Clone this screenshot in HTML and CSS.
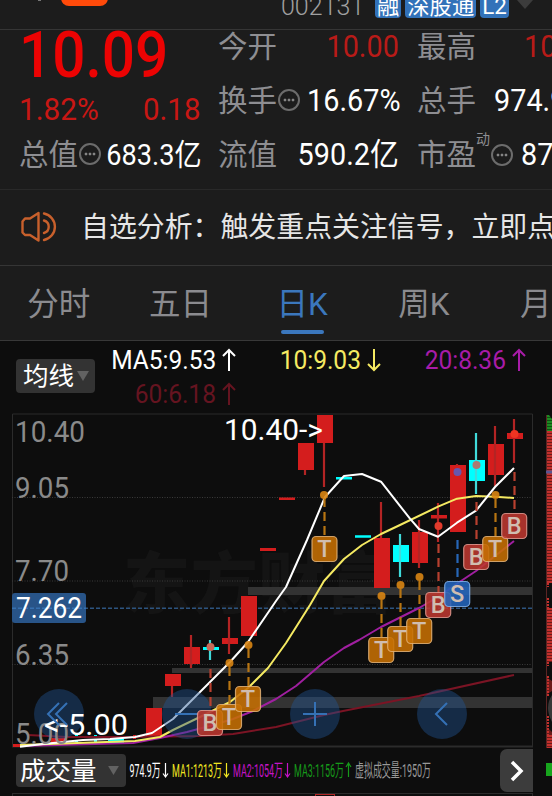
FILE: index.html
```html
<!DOCTYPE html>
<html lang="zh-CN">
<head>
<meta charset="utf-8">
<title>002131</title>
<link rel="stylesheet" href="styles.css">
</head>
<body>
<header class="topbar">
  <i class="tick"></i><i class="pill"></i>
  <span class="code">002131</span>
  <span class="tag">融</span><span class="tag">深股通</span><span class="tag">L2</span>
  <svg class="caret" width="16" height="16" viewBox="0 0 16 16"><path d="M0 5 3 2h10l3 3-8 9z" fill="#3c3c3c"/></svg>
</header>
<section class="quote">
  <div class="col price">
    <div class="last"><span>10.09</span></div>
    <div class="change"><span class="pct">1.82%</span><span class="diff">0.18</span></div>
    <div class="cell"><span class="label">总值</span><i class="more"></i><span class="val cny">683.3亿</span></div>
  </div>
  <div class="col">
    <div class="cell"><span class="label">今开</span><span class="val up">10.00</span></div>
    <div class="cell"><span class="label">换手</span><i class="more"></i><span class="val">16.67%</span></div>
    <div class="cell"><span class="label">流值</span><span class="val">590.2亿</span></div>
  </div>
  <div class="col">
    <div class="cell"><span class="label">最高</span><span class="val up lead">10.40</span></div>
    <div class="cell"><span class="label">总手</span><span class="val lead2">974.9万</span></div>
    <div class="cell"><span class="label">市盈</span><sup>动</sup><i class="more"></i><span class="val lead3">87.12</span></div>
  </div>
</section>
<section class="notice">
  <svg width="38" height="32" viewBox="0 0 38 32" fill="none" stroke="#c8602c" stroke-width="2.4" stroke-linejoin="round" stroke-linecap="round"><path d="M4 7.500h5L17.500 2v27.500L9 24H4L1.500 21.500v-11z"/><path d="M23 2.500a13.500 13.500 0 0 1 0 26.500M23 9.500a6.500 6.500 0 0 1 0 12.500"/></svg>
  <span>自选分析：触发重点关注信号，立即点击</span>
</section>
<nav class="tabs"><a>分时</a><a>五日</a><a class="on">日K</a><a>周K</a><a>月K</a></nav>
<main class="panel">
  <div class="legend">
    <div class="pick">均线<svg width="12" height="10" viewBox="0 0 12 10"><path d="M0 0h12L6 10z" fill="#626262"/></svg></div>
    <div class="mas">
      <span class="ma5"><b>MA5:9.53</b><svg width="14" height="24" viewBox="0 0 14 24"><path d="M7 23V2M1 8l6-6 6 6"/></svg></span>
      <span class="ma10"><b>10:9.03</b><svg width="14" height="24" viewBox="0 0 14 24"><path d="M7 1v21M1 16l6 6 6-6"/></svg></span>
      <span class="ma20"><b>20:8.36</b><svg width="14" height="24" viewBox="0 0 14 24"><path d="M7 23V2M1 8l6-6 6 6"/></svg></span>
      <span class="ma60"><b>60:6.18</b><svg width="14" height="24" viewBox="0 0 14 24"><path d="M7 23V2M1 8l6-6 6 6"/></svg></span>
    </div>
  </div>
  <svg class="chart" width="552" height="335" viewBox="0 413 552 335">
    <text class="mark" x="123" y="608" textLength="270">东方财富</text>
    <path class="frame" d="M12.500 747V414H532.500V747"/>
    <path d="M12 746.500H533" stroke="#2b2b2b" stroke-width="2"/>
    <path class="grid" d="M12 497.500H532M12 581H532M12 664.500H532"/>
    <path d="M248 587h284v8H248zM172 668h360v5H172zM153 697h379v11H153z" fill="#333"/>
    <path d="M12 608.200H532" stroke="#2d5480" stroke-width="1.500" stroke-dasharray="4 2"/>
    <g class="axis">
      <text x="15" y="442" textLength="70" lengthAdjust="spacingAndGlyphs">10.40</text>
      <text x="15" y="498" textLength="54" lengthAdjust="spacingAndGlyphs">9.05</text>
      <text x="15" y="581" textLength="54" lengthAdjust="spacingAndGlyphs">7.70</text>
      <text x="15" y="665" textLength="54" lengthAdjust="spacingAndGlyphs">6.35</text>
    </g>
    <rect x="12" y="593" width="74" height="30" rx="3" fill="#285488"/>
    <path d="M12 608.200H86" stroke="#3670b0" stroke-width="1.500" stroke-dasharray="4 2"/>
    <text class="white" x="16" y="617.500" textLength="66" lengthAdjust="spacingAndGlyphs">7.262</text>
    <g class="red">
      <path d="M317 415h16v28h-16zM298 443h16v27h-16zM279 497.500h16v2.500h-16zM260 548h16v3h-16zM374 538h16v50h-16zM412 532h16v31h-16zM431 515h16v3.500h-16zM450 465h16v67h-16zM488 444h16v31h-16zM507 433h16v6h-16zM241 596h16v40h-16zM222 638h16v6h-16zM184 647h16v17h-16zM165 674h16v12h-16zM146 708h16v29h-16zM51 738h16v5H51zM13 744h16v3H13zM133 735h3v4h-3z"/>
      <path class="wick" d="M324 443V487M305 470V475M381 502V538M419 520V568M438 503V542M457 464V466M495 426V486M514 419V463M229 617V654M191 635V668M172 686V697"/>
    </g>
    <g class="cyan">
      <path d="M336 477h16v2.500h-16zM355 535.300h16v2.500h-16zM393 545h16v17h-16zM469 460h16v21h-16zM203 647h16v3h-16zM108 739h16v4h-16zM75 735h3v3h-3zM75 740h3v2h-3zM94 735h3v3h-3zM94 740h3v2h-3z"/>
      <path class="wick" d="M400 534V577M476 433V494M210 640V660"/>
    </g>
    <path class="line" stroke="#7b1424" d="M28 735 67 737H133L200 736 233 734 276 727 324 715 343 711 419 696 514 675"/>
    <path class="line" stroke="#a01fa0" d="M20 746 133 743 160 738 187 732 213 725 233 719 253 711 276 699 296 686 324 662 344 648 359 640 381 627 419 608 438 597 458 583 476 571 514 541"/>
    <path class="line" stroke="#f5ea62" d="M20 745 135 741 160 737 173 730 200 717 230 702 248 688 268 668 286 643 310 605 324 581 344 559 362 545 381 534 400 525 438 506.700 457 498.700 476 496 495 496.700 514 498"/>
    <path class="line" stroke="#fff" d="M20 746.700 43 744 83 740 110 739 135 737 152 733 173 719 187 705 230 662 248 642 276 601 286 587 307 540 325 497 344 476 362 474 381 481.700 410 518.700 419 529 438 536.700 457 522.700 476 510.700 495 487 514 468"/>
    <text class="white" x="224" y="440" textLength="99" lengthAdjust="spacingAndGlyphs">10.40-&gt;</text>
    <g class="pad"><circle cx="59" cy="714" r="25"/><circle cx="187" cy="714" r="25"/><circle cx="315" cy="714" r="25"/><circle cx="442" cy="714" r="25"/></g>
    <text class="low" x="15" y="744" textLength="54" lengthAdjust="spacingAndGlyphs">5.00</text>
    <text class="white" x="44" y="735" textLength="84" lengthAdjust="spacingAndGlyphs">&lt;-5.00</text>
    <path class="glyph" d="M59 703 48 714 59 725M67 703 56 714 67 725M175 714H199M303 714H327M315 702V726M447 703 436 714 447 725"/>
    <g class="stem">
      <path stroke="#b87512" d="M324.500 498V536M381.500 600V637M400.500 589V626M419.500 581V618M495.500 499V536M229.500 667V704M248.500 649V686"/>
      <path stroke="#b8402f" d="M438.500 544V593M476.500 502V545M514.500 472V513M210.500 669V711"/>
      <path stroke="#2767b8" d="M457.500 540V582"/>
    </g>
    <g fill="#d98513" fill-opacity=".9"><circle cx="324" cy="495" r="4"/><circle cx="381.500" cy="596" r="4"/><circle cx="400.500" cy="585" r="4"/><circle cx="419.500" cy="577" r="4"/><circle cx="495.500" cy="495" r="4"/><circle cx="229.500" cy="663" r="4"/><circle cx="248.500" cy="645" r="4"/></g>
    <circle cx="438.500" cy="526" r="4" fill="#e23b2c"/><circle cx="514.500" cy="434" r="4" fill="#f03422"/><circle cx="457.500" cy="472" r="4" fill="#6757ad"/><circle cx="476.500" cy="465" r="4" fill="#ab7a70"/><circle cx="210.500" cy="647" r="4" fill="#c96a58"/>
    <g class="badge">
      <g class="t" transform="translate(324.500 549)"><rect x="-12.500" y="-12.500" width="25" height="25" rx="4"/><text y="8">T</text></g>
      <g class="t" transform="translate(381.200 650)"><rect x="-12.500" y="-12.500" width="25" height="25" rx="4"/><text y="8">T</text></g>
      <g class="t" transform="translate(400.200 639)"><rect x="-12.500" y="-12.500" width="25" height="25" rx="4"/><text y="8">T</text></g>
      <g class="t" transform="translate(419.200 631)"><rect x="-12.500" y="-12.500" width="25" height="25" rx="4"/><text y="8">T</text></g>
      <g class="b" transform="translate(438.200 605)"><rect x="-12.500" y="-12.500" width="25" height="25" rx="4"/><text y="8">B</text></g>
      <g class="s" transform="translate(457.200 594)"><rect x="-12.500" y="-12.500" width="25" height="25" rx="4"/><text y="8">S</text></g>
      <g class="b" transform="translate(476.200 557)"><rect x="-12.500" y="-12.500" width="25" height="25" rx="4"/><text y="8">B</text></g>
      <g class="t" transform="translate(495.200 549)"><rect x="-12.500" y="-12.500" width="25" height="25" rx="4"/><text y="8">T</text></g>
      <g class="b" transform="translate(514.200 526)"><rect x="-12.500" y="-12.500" width="25" height="25" rx="4"/><text y="8">B</text></g>
      <g class="b" transform="translate(210 723)"><rect x="-12.500" y="-12.500" width="25" height="25" rx="4"/><text y="8">B</text></g>
      <g class="t" transform="translate(229 717)"><rect x="-12.500" y="-12.500" width="25" height="25" rx="4"/><text y="8">T</text></g>
      <g class="t" transform="translate(248 699)"><rect x="-12.500" y="-12.500" width="25" height="25" rx="4"/><text y="8">T</text></g>
    </g>
    <path d="M546 415h6v16h-6z" fill="#0f5013"/>
    <path d="M546 431h6v152h-6zM546 606l6 3v53h-6zM546 677l6 4v10l-6 4zM546 726l6 6v16h-6z" fill="#6b1a19"/>
    <g class="chips">
      <path stroke="#1c8a22" d="M549 415V431"/>
      <path stroke="#c2302c" d="M549 431V583M549 608V662M549 735V748"/>
      <path stroke="#c2302c" stroke-width="3" d="M547.500 583V587M547.500 598V608M547.500 676V696M547.500 716V735M547.500 662V666"/>
    </g>
    <path d="M549 415h3v4z" fill="#0d0d0d"/>
    <path d="M546.500 415V748" stroke="#5a2524"/>
    <path d="M546 472H552" stroke="#5a5590" stroke-width="3"/>
    <path d="M552 695Q544 707 552 722z" fill="#383838"/>
  </svg>
  <div class="volume">
    <div class="pick wide">成交量<svg width="11" height="9" viewBox="0 0 12 10"><path d="M0 0h12L6 10z" fill="#626262"/></svg></div>
    <svg class="stats" width="304" height="30" viewBox="129 756 304 30">
      <g fill="#fff" stroke="#fff"><text x="129.500" y="777" textLength="31" lengthAdjust="spacingAndGlyphs">974.9万</text><path d="M165.500 763V777M163 773.500 165.500 777 168 773.500"/></g>
      <g fill="#f2e722" stroke="#f2e722"><text x="172" y="777" textLength="50" lengthAdjust="spacingAndGlyphs">MA1:1213万</text><path d="M226.500 763V777M224 773.500 226.500 777 229 773.500"/></g>
      <g fill="#c414c8" stroke="#c414c8"><text x="233" y="777" textLength="50" lengthAdjust="spacingAndGlyphs">MA2:1054万</text><path d="M287.500 763V777M285 773.500 287.500 777 290 773.500"/></g>
      <g fill="#169a1a" stroke="#169a1a"><text x="294" y="777" textLength="50" lengthAdjust="spacingAndGlyphs">MA3:1156万</text><path d="M348.500 777V763M346 767 348.500 763 351 767"/></g>
      <text x="355" y="777" fill="#999" textLength="76" lengthAdjust="spacingAndGlyphs">虚拟成交量:1950万</text>
    </svg>
    <div class="next"><svg width="14" height="22" viewBox="0 0 14 22"><path d="M2 2l9 9-9 9" fill="none" stroke="#fff" stroke-width="3.500"/></svg></div>
    <i class="block"></i>
  </div>
  <div class="sub"><i></i></div>
</main>
</body>
</html>
```
FILE: styles.css
```css
* { box-sizing: border-box; }
body {
  margin: 0;
  width: 552px;
  height: 796px;
  overflow: hidden;
  background: #1c1c1c;
  color: #fff;
  font-family: Roboto, "Noto Sans CJK SC", sans-serif;
}
i { font-style: normal; }
svg { flex: none; display: block; }

.topbar {
  display: flex;
  align-items: flex-end;
  height: 30px;
  padding: 0 0 11px 38px;
  border-bottom: 1px solid #353535;
  overflow: hidden;
}
.tick { flex: none; width: 3px; height: 1px; margin-bottom: 17px; background: #777; }
.pill { flex: none; width: 47px; height: 24px; margin: 0 173px 12px 20px; border-radius: 8px; background: #ff4a0a; }
.code { flex: none; width: 94px; margin-bottom: -2px; font-size: 25px; line-height: 26px; font-weight: 300; color: #a0a0a0; }
.tag {
  flex: none;
  height: 26px;
  margin-right: 4px;
  padding: 0 2px;
  border-radius: 4px;
  background: #3272b9;
  font-size: 22.300px;
  line-height: 28px;
}
.caret { margin: 0 0 7px 4px; }

.quote {
  display: grid;
  grid-template-columns: repeat(3, 181px);
  column-gap: 18px;
  height: 160px;
  padding-left: 19px;
  border-bottom: 1px solid #292929;
  overflow: hidden;
}
.cell { display: flex; align-items: center; height: 54px; white-space: nowrap; }
.col { margin-top: -10px; }
.label { font-size: 29.500px; line-height: 54px; color: #8e8e92; }
.val {
  margin-left: auto;
  font-size: 31px;
  line-height: 54px;
  transform: scaleX(.93);
  transform-origin: right;
}
.cny { margin-left: -3px; font-size: 29.500px; transform: scaleX(.92); }
.up { color: #b81b18; }
.lead, .lead2, .lead3 { transform-origin: left; }
.lead { margin-left: 48px; }
.lead2 { margin-left: 18px; }
.lead3 { margin-left: 8px; }
.more {
  flex: none;
  width: 22px;
  height: 22px;
  margin-left: 1px;
  border: 2px solid #6c6c6c;
  border-radius: 50%;
  background:
    radial-gradient(circle at 5px 9px, #858585 1.200px, transparent 1.700px),
    radial-gradient(circle at 9px 9px, #858585 1.200px, transparent 1.700px),
    radial-gradient(circle at 13px 9px, #858585 1.200px, transparent 1.700px);
}
.label + .more { margin-top: -3px; }
sup { align-self: flex-start; width: 17px; margin-top: 2px; font-size: 14px; line-height: 18px; color: #8e8e92; }
.price { margin-top: 0; }
.last { height: 56px; font-size: 65px; line-height: 51px; font-weight: 500; color: #ec0303; }
.last span { display: inline-block; transform: scaleX(.9); transform-origin: left; }
.change { display: flex; justify-content: space-between; height: 42px; font-size: 31px; line-height: 48px; color: #c81714; }
.pct { transform: scaleX(.96); transform-origin: left; }
.diff { transform: scaleX(.95); transform-origin: right; }

.notice {
  display: flex;
  align-items: center;
  height: 76px;
  padding: 0 0 1px 21px;
  border-bottom: 1px solid #353535;
  font-size: 27.900px;
  color: #e6e6e6;
  white-space: nowrap;
  overflow: hidden;
}
.notice span { margin: -4px 0 0 22px; }

.tabs { display: flex; height: 75px; margin-left: -2px; border-bottom: 1px solid #383838; overflow: hidden; }
.tabs a {
  display: flex;
  flex: none;
  flex-direction: column;
  align-items: center;
  width: 121.700px;
  font-size: 31.500px;
  line-height: 77px;
  color: #8b8b8f;
}
.tabs .on { color: #3b77bd; }
.on::after { content: ""; width: 43px; height: 4px; margin-top: -13px; border-radius: 2px; background: #3b77bd; }

.panel { height: 455px; background: #0d0d0d; }
.legend { display: flex; height: 72px; padding-left: 16px; }
.pick {
  display: flex;
  flex: none;
  align-items: center;
  justify-content: space-between;
  width: 79px;
  height: 34px;
  margin-top: 18px;
  padding: 0 6px 0 7px;
  border-radius: 4px;
  background: #333;
  font-size: 25.500px;
  line-height: 34px;
}
.mas { display: grid; flex: none; grid-template-columns: repeat(3, 145px); grid-template-rows: 34px 34px; margin-left: -4px; padding-top: 2px; }
.mas span { display: flex; align-items: center; justify-content: flex-end; gap: 6px; }
.mas b { font-size: 25px; font-weight: 400; transform: scaleX(.98); transform-origin: right; }
.mas path { fill: none; stroke: currentColor; stroke-width: 2; }
.ma10 { color: #f5ea62; }
.ma20 { color: #a81ca8; }
.ma60 { color: #651420; }

.chart text { font-size: 30px; }
.chart .mark { font-size: 67px; font-weight: 900; fill: #141414; font-family: "Noto Sans CJK SC", sans-serif; }
.frame { fill: none; stroke: #2b2b2b; }
.grid { stroke: #3a3a3a; stroke-dasharray: 1 1.500; }
.axis, .low { fill: #8a8a8a; }
.white { fill: #fff; }
.red { fill: #d41d1d; }
.cyan { fill: #0ff; }
.wick { stroke-width: 2.200; fill: none; }
.red .wick { stroke: #b32424; }
.cyan .wick { stroke: #40dada; }
.line { fill: none; stroke-width: 2; stroke-linejoin: round; }
.pad { fill: #205391; fill-opacity: .43; }
.glyph { fill: none; stroke: #3571b5; stroke-width: 2; }
.stem { fill: none; stroke-width: 2.200; stroke-dasharray: 9 5; }
.badge rect { stroke-width: 1.200; stroke-opacity: .85; fill-opacity: .88; }
.chart .badge text { font-size: 23.500px; font-weight: 500; text-anchor: middle; fill: #d0bdb0; }
.t rect { fill: #c66f03; stroke: #e3b378; }
.b rect { fill: #bd3830; stroke: #e09a90; }
.s rect { fill: #2365bd; stroke: #82b2ea; }
.chips { stroke-width: 6; stroke-dasharray: 2 1; }

.volume { display: flex; height: 45px; padding-left: 16px; }
.wide { width: 110px; height: 33px; margin-top: 6px; padding: 0 7px 0 4px; }
.stats { margin: 8px 0 0 3px; }
.stats text { font-size: 18px; stroke: none; }
.stats path { fill: none; stroke-width: 1.200; }
.next { display: flex; flex: none; align-items: center; justify-content: center; width: 33px; height: 43px; margin: 1px 0 0 67px; border-radius: 7px 0 0 7px; background: #3c3c3c; }
.block { flex: none; width: 6px; height: 13px; margin: 15px 0 0 13px; background: #17a51d; }
.sub { height: 3px; margin-left: 12px; width: 521px; border: solid #2b2b2b; border-width: 1px 1px 0; }
.sub i { display: block; width: 20px; height: 3px; margin-left: 302px; border: 1px solid #b32424; border-bottom: 0; }
```
